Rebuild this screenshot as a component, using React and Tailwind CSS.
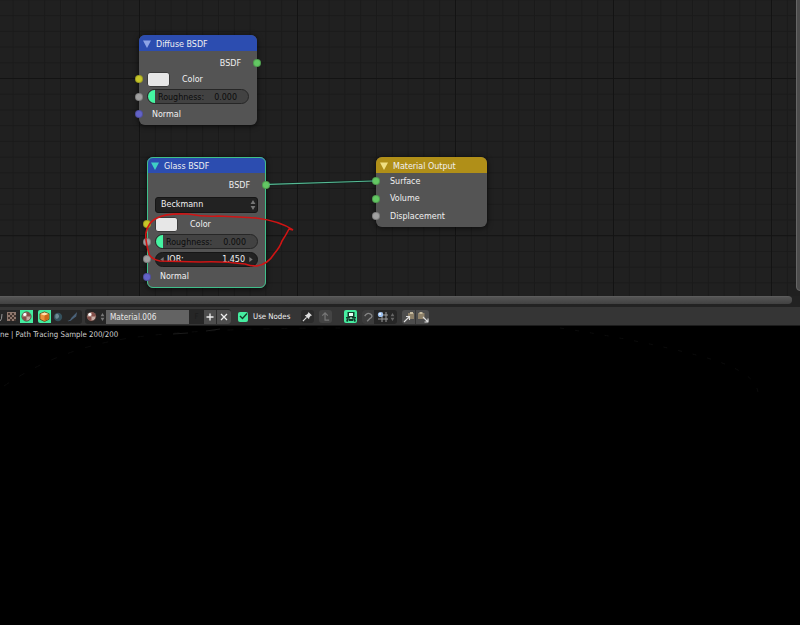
import React from 'react';

const SOCKET_COLORS = {
    shader: 'bg-[#63c763]',
    color: 'bg-[#c7c729]',
    value: 'bg-[#a1a1a1]',
    vector: 'bg-[#6363c7]',
};

function Socket({ type, side = 'left' }) {
    return (
        <span
            className={`absolute top-1/2 size-[8px] -translate-y-1/2 rounded-full border border-black/20 ${SOCKET_COLORS[type]} ${side === 'left' ? '-left-[4px]' : '-right-[4px]'}`}
        />
    );
}

function Row({ children, className = '' }) {
    return <div className={`relative flex h-[17.5px] shrink-0 items-center ${className}`}>{children}</div>;
}

function Node({ title, header, arrow, className, children }) {
    return (
        <section
            className={`absolute flex flex-col rounded-[6px] bg-[#575757f2] shadow-[0_1px_5px_1px_rgba(0,0,0,0.5)] ${className}`}
        >
            <header className={`flex h-[16px] shrink-0 items-center rounded-t-[6px] pl-[4px] pt-px ${header}`}>
                <svg viewBox="0 0 8 8" className={`size-[8px] ${arrow}`} fill="currentColor">
                    <path d="M0 .5h8L4 8z" />
                </svg>
                <span className="ml-[5px] pt-px">{title}</span>
            </header>
            {children}
        </section>
    );
}

function ColorRow() {
    return (
        <Row className="pl-[8px]">
            <Socket type="color" />
            <span className="h-[15px] w-[23px] rounded-[3px] border border-[#3c3c3c] bg-[#e7e7e7]" />
            <span className="ml-[12px]">Color</span>
        </Row>
    );
}

function RoughnessRow() {
    return (
        <Row className="px-[8px]">
            <Socket type="value" />
            <div className="flex h-[15px] flex-1 items-center overflow-hidden rounded-full border border-[#262626] bg-[#424242] text-[#0c0c0c]">
                <span className="h-full w-[7px] bg-[#45f5a2]" />
                <span className="ml-[3px] flex-1 pt-px">Roughness:</span>
                <span className="mr-[11px] pt-px">0.000</span>
            </div>
        </Row>
    );
}

function NormalRow() {
    return (
        <Row className="pl-[13px]">
            <Socket type="vector" />
            Normal
        </Row>
    );
}

function UpDown({ className = '' }) {
    return (
        <svg viewBox="0 0 6 10" className={`shrink-0 ${className}`} fill="currentColor">
            <path d="M3 0l2.4 4H.6zM3 10L.6 6h4.8z" />
        </svg>
    );
}

function NodeEditor() {
    return (
        <main className="relative h-[296px] shrink-0 overflow-hidden bg-[#202020] text-[8.9px]">
            <svg className="absolute inset-0 size-full">
                <defs>
                    <pattern id="minor" x="139" y="78" width="15.8" height="15.72" patternUnits="userSpaceOnUse">
                        <path d="M.5 0V16M0 .5H16" stroke="#1a1a1a" />
                    </pattern>
                    <pattern id="major" x="139" y="78" width="158" height="157.2" patternUnits="userSpaceOnUse">
                        <path d="M.5 0V158M0 .5H158" stroke="#131313" />
                    </pattern>
                </defs>
                <rect width="100%" height="100%" fill="url(#minor)" />
                <rect width="100%" height="100%" fill="url(#major)" />
            </svg>

            <Node
                title="Diffuse BSDF"
                header="bg-[#2c4db0]"
                arrow="text-[#8da4e6]"
                className="left-[139px] top-[35px] h-[90px] w-[118px]"
            >
                <Row className="mt-[3px] -mb-px justify-end pr-[16px]">
                    <span className="pt-[2px]">BSDF</span>
                    <Socket type="shader" side="right" />
                </Row>
                <ColorRow />
                <RoughnessRow />
                <NormalRow />
            </Node>

            <Node
                title="Glass BSDF"
                header="bg-[#2c4db0]"
                arrow="text-[#3fd0c4]"
                className="left-[147px] top-[157px] h-[131px] w-[119px] outline-1 -outline-offset-1 outline-[#3fbf8a]"
            >
                <Row className="mt-[3px] justify-end pr-[16px]">
                    <span className="pt-[2px]">BSDF</span>
                    <Socket type="shader" side="right" />
                </Row>
                <div className="mx-[8px] mt-[3px] mb-[3px] flex h-[16px] shrink-0 items-center justify-between rounded-[3px] border border-[#161616] bg-[#222] px-[5px]">
                    Beckmann
                    <UpDown className="-mr-[4px] h-[10px] w-[6px] text-[#777]" />
                </div>
                <ColorRow />
                <RoughnessRow />
                <Row className="px-[8px]">
                    <Socket type="value" />
                    <div className="flex h-[15px] flex-1 items-center rounded-full border border-[#161616] bg-[#222] px-[4px]">
                        <svg viewBox="0 0 4 6" className="h-[5px] w-[4px] text-[#777]" fill="currentColor">
                            <path d="M4 0v6L0 3z" />
                        </svg>
                        <span className="ml-[3px] flex-1 pt-px">IOR:</span>
                        <span className="pt-px">1.450</span>
                        <svg viewBox="0 0 4 6" className="ml-[4px] h-[5px] w-[4px] text-[#777]" fill="currentColor">
                            <path d="M0 0v6l4-3z" />
                        </svg>
                    </div>
                </Row>
                <NormalRow />
            </Node>

            <Node
                title="Material Output"
                header="bg-[#b08f18]"
                arrow="text-[#f0df80]"
                className="left-[376px] top-[157px] h-[70px] w-[111px]"
            >
                <Row className="-mt-[0.5px] pl-[14px]">
                    <Socket type="shader" />
                    Surface
                </Row>
                <Row className="pl-[14px]">
                    <Socket type="shader" />
                    Volume
                </Row>
                <Row className="pl-[14px]">
                    <Socket type="value" />
                    Displacement
                </Row>
            </Node>

            {/* link and annotation stroke */}
            <svg viewBox="0 0 800 296" className="absolute inset-0 size-full" fill="none">
                <path d="M270 184.300L372 181" stroke="#10201a" strokeWidth="2.4" />
                <path d="M269 184.400L373 181" stroke="#56b894" strokeWidth="1.1" />
                <path
                    d="M293 230L289 229Q286 235 282 241Q280 247 274 254Q268 264 257 266Q250 266 245 264Q222 261 200 262L160 261Q151 259 149 254Q145 240 146 233Q148 222 157 218Q166 213 188 214Q205 217 218 216Q240 217 256 218Q280 221 293 230"
                    stroke="#d01414"
                    strokeWidth="1.6"
                    strokeLinejoin="round"
                />
            </svg>

            <div className="absolute -top-2 left-[796px] h-[299px] w-[9px] rounded-b-[4px] border border-[#666] bg-[#4c4c4c]" />
        </main>
    );
}

function MaterialBall({ className = '' }) {
    return (
        <svg viewBox="0 0 12 12" className={`size-[11px] ${className}`}>
            <circle cx="6" cy="6" r="5" fill="#c4aaa2" stroke="#3a2420" strokeWidth=".8" />
            <path d="M6 6V1.200A4.800 4.800 0 0 1 10.800 6zM6 6v4.800A4.800 4.800 0 0 1 1.200 6z" fill="#85504a" />
            <circle cx="4.200" cy="3.800" r="1.600" fill="#fff" />
        </svg>
    );
}

function Toolbar() {
    return (
        <div className="flex h-[19px] shrink-0 items-center overflow-hidden border-b border-[#1c1c1c] bg-[#353535] pt-px">
            <div className="flex h-[14px] w-[82px] shrink-0 items-center rounded-r-[3px] bg-[#262626]">
                <svg viewBox="0 0 5 12" className="h-[12px] w-[5px]" fill="none">
                    <path d="M0 10Q2 9 2 3" stroke="#999" />
                </svg>
                <svg viewBox="0 0 9 9" className="ml-[2px] size-[9px]">
                    <path d="M0 0h9v9H0z" fill="#8f786d" />
                    <path d="M1 1h2v2H1zM5 1h2v2H5zM3 3h2v2H3zM7 3h2v2H7zM1 5h2v2H1zM5 5h2v2H5zM3 7h2v2H3zM7 7h2v2H7z" fill="#43352f" />
                </svg>
                <span className="ml-[4px] flex size-[13px] items-center justify-center bg-[#45eda0]">
                    <MaterialBall />
                </span>
                <span className="ml-[5px] flex size-[13px] items-center justify-center rounded-l-[2px] bg-[#45eda0]">
                    <svg viewBox="0 0 12 12" className="size-[11px]">
                        <path d="M1 3l5-2 5 2v6l-5 2.500L1 9z" fill="#e8933c" stroke="#5c3410" strokeWidth=".8" />
                        <path d="M1.500 3.200L6 5l4.500-1.800L6 1.500z" fill="#ffe2b0" />
                        <path d="M6 5v6l4.500-2.300V3.200z" fill="#c9691a" />
                    </svg>
                </span>
                <svg viewBox="0 0 12 12" className="ml-[2px] size-[10px]">
                    <circle cx="6" cy="6" r="5" fill="#34505c" />
                    <path d="M3 3q3-2 4 1T5 8 3 3z" fill="#6d8a92" />
                </svg>
                <svg viewBox="0 0 12 12" className="ml-[4px] size-[11px]">
                    <path d="M.5 11Q4 10 5 7l6-6-1 5-4 3Q4 11.500.5 11z" fill="#4a6178" />
                </svg>
            </div>

            <div className="ml-[3px] flex h-[15px] shrink-0 items-center rounded-[3px] bg-[#262626]">
                <span className="flex w-[21px] items-center gap-[3px] pl-[1px]">
                    <MaterialBall className="shrink-0" />
                    <UpDown className="h-[8px] w-[5px] text-[#777]" />
                </span>
                <span className="flex h-[14px] w-[83px] items-center bg-[#636363] pt-[2px] pl-[4px] text-[8.2px] text-[#e8e8e8]">
                    Material.006
                </span>
                <span className="w-[15px] text-center text-[#1c1c1c]">F</span>
                <span className="flex h-[14px] w-[13px] items-center justify-center border-r border-[#2c2c2c] bg-[#4d4d4d]">
                    <svg viewBox="0 0 8 8" className="size-[8px]">
                        <path d="M4 .5v7M.5 4h7" stroke="#eee" strokeWidth="1.300" />
                    </svg>
                </span>
                <span className="flex h-[14px] w-[14px] items-center justify-center rounded-r-[3px] bg-[#4d4d4d]">
                    <svg viewBox="0 0 8 8" className="size-[8px]">
                        <path d="M1 1l6 6M7 1L1 7" stroke="#eee" strokeWidth="1.300" />
                    </svg>
                </span>
            </div>

            <span className="ml-[7px] flex size-[10px] shrink-0 items-center justify-center rounded-[2px] bg-[#45eda0]">
                <svg viewBox="0 0 10 10" className="size-[10px]" fill="none">
                    <path d="M2 4l2.500 2.500L9 1.500" stroke="#163c2a" strokeWidth="1.400" />
                </svg>
            </span>
            <span className="ml-[5px] w-[48px] shrink-0 pt-px whitespace-nowrap">Use Nodes</span>

            <span className="flex size-[13px] shrink-0 items-center justify-center rounded-[3px] bg-[#2a2a2a]">
                <svg viewBox="0 0 12 12" className="size-[11px]">
                    <path d="M7 1l4 4-1.500.3L8 7l-.3 2L3 4.500l2-.3L6.700 2.500z" fill="#ddd" />
                    <path d="M5 7L1 11" stroke="#ddd" strokeWidth="1.200" />
                </svg>
            </span>
            <span className="ml-[5px] flex size-[13px] shrink-0 items-center justify-center rounded-[3px] bg-[#444]">
                <svg viewBox="0 0 12 12" className="size-[11px]" fill="none">
                    <path d="M10 10H5.500V2M2.500 5l3-3 3 3" stroke="#777" strokeWidth="1.300" />
                </svg>
            </span>

            <span className="ml-[12px] flex size-[13px] shrink-0 items-center justify-center rounded-[2px] bg-[#45eda0]">
                <svg viewBox="0 0 12 12" className="size-[12px]">
                    <path d="M2.500 1h7v5h-7zM1 6h10v1.500H1z" fill="#14382a" />
                    <path d="M4 2h4v3H4z" fill="#e9fff4" />
                    <path d="M3 7.500L2 10.500M9 7.500l1 3M4 9h4" stroke="#14382a" strokeWidth="2" />
                    <path d="M5 6.500h2v1H5z" fill="#e9fff4" />
                </svg>
            </span>

            <div className="ml-[5px] flex h-[14px] shrink-0 items-center rounded-[3px] bg-[#262626]">
                <span className="flex h-[14px] w-[12px] items-center justify-center rounded-l-[3px] bg-[#3c3c3c]">
                    <svg viewBox="0 0 12 12" className="size-[10px]" fill="none">
                        <path d="M2 5Q5 0 9 2.500T8 8L5 11" stroke="#858585" strokeWidth="1.600" />
                    </svg>
                </span>
                <span className="flex h-[14px] w-[23px] items-center gap-px pl-[3px]">
                    <svg viewBox="0 0 12 12" className="size-[12px] shrink-0">
                        <path d="M5 1v10M9 1v10M1 8h10M5 4h6" stroke="#999" strokeWidth="1" />
                        <circle cx="3.500" cy="3.500" r="2.600" fill="#9cc0ee" />
                        <circle cx="3" cy="3" r="1" fill="#fff" />
                    </svg>
                    <UpDown className="h-[8px] w-[5px] text-[#666]" />
                </span>
            </div>

            <div className="ml-[5px] flex h-[14px] shrink-0 gap-px overflow-hidden rounded-[3px]">
                <span className="flex w-[13px] items-center justify-center bg-[#4d4d4d]">
                    <svg viewBox="0 0 12 12" className="size-[12px]">
                        <path d="M5 2h6v6H5z" fill="#8d8068" />
                        <path d="M7 1h3v2H7z" fill="#c4b99e" />
                        <path d="M1 11l5-5M3 5.500h3.500V9" stroke="#ddd" strokeWidth="1.100" fill="none" />
                    </svg>
                </span>
                <span className="flex w-[13px] items-center justify-center bg-[#4d4d4d]">
                    <svg viewBox="0 0 12 12" className="size-[12px]">
                        <path d="M1 2h6.500v6H1z" fill="#8d8068" />
                        <path d="M2.500 1h3v2h-3z" fill="#c4b99e" />
                        <path d="M6 6l5 5M7.500 11H11V7.500" stroke="#ddd" strokeWidth="1.100" fill="none" />
                    </svg>
                </span>
            </div>
        </div>
    );
}

function Viewport() {
    return (
        <div className="relative flex-1 bg-black">
            <p className="pt-[2px] leading-[13px] text-[#d0d0d0]">ne | Path Tracing Sample 200/200</p>
            <svg className="absolute inset-0 size-full" fill="none">
                <path d="M4 60Q60 22 130 12T340 2" stroke="#0b0b0b" strokeDasharray="6 12" />
                <path d="M560 2Q640 14 700 30T758 70" stroke="#0c0c0c" strokeDasharray="4 11" />
                <path d="M173 8l15-1M206 5l14-2" stroke="#1a1a1a" />
            </svg>
        </div>
    );
}

export default function App() {
    return (
        <div className="flex h-[625px] w-[800px] flex-col overflow-hidden bg-black font-['DejaVu_Sans',sans-serif] text-[7.8px] leading-none text-[#f0f0f0] [font-stretch:condensed]">
            <NodeEditor />
            <div className="flex h-[11px] shrink-0 items-start bg-[#222]">
                <div className="h-[8px] w-[792px] rounded-r-full border-t border-[#5c5c5c] bg-linear-to-b from-[#555] to-[#414141]" />
            </div>
            <Toolbar />
            <Viewport />
        </div>
    );
}
